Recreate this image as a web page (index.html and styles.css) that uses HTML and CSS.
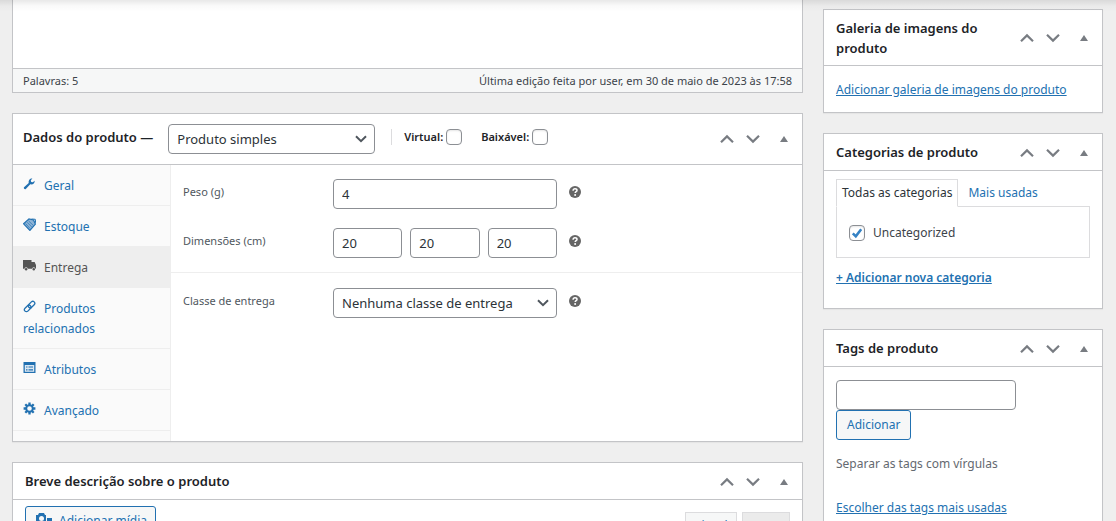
FILE: index.html
```html
<!DOCTYPE html>
<html lang="pt-BR">
<head>
<meta charset="utf-8">
<meta name="viewport" content="width=device-width, initial-scale=1">
<title>Editar produto</title>
<link rel="stylesheet" href="styles.css">
</head>
<body>
<svg class="sprite" aria-hidden="true">
  <symbol id="up" viewBox="0 0 14 10"><path d="M1 8.2 7 2.4l6 5.8" fill="none" stroke="currentColor" stroke-width="2.2"/></symbol>
  <symbol id="down" viewBox="0 0 14 10"><path d="M1 1.8 7 7.6l6-5.8" fill="none" stroke="currentColor" stroke-width="2.2"/></symbol>
  <symbol id="toggle" viewBox="0 0 8 6"><path d="M4 0 8 6H0z" fill="currentColor"/></symbol>
  <symbol id="help" viewBox="0 0 12 12"><circle cx="6" cy="6" r="6" fill="currentColor"/><path d="M4.1 4.7C4.1 3.4 4.9 2.8 6 2.8s2 .6 2 1.6c0 1.3-1.8 1.3-1.8 2.6" fill="none" stroke="#fff" stroke-width="1.5"/><circle cx="6.1" cy="8.9" r="1" fill="#fff"/></symbol>
</svg>
<div class="topbar"></div>
<div class="page">
  <main class="main">
    <section class="editor">
      <div class="editor-body"></div>
      <div class="editor-status"><span>Palavras: 5</span><span>Última edição feita por user, em 30 de maio de 2023 às 17:58</span></div>
    </section>

    <section class="box">
      <header class="box-head data-head">
        <h2>Dados do produto —</h2>
        <select class="type-select" aria-label="Tipo de produto"><option>Produto simples</option></select>
        <div class="type-flags">
          <label>Virtual: <input type="checkbox"></label>
          <label>Baixável: <input type="checkbox"></label>
        </div>
        <div class="actions">
          <button type="button" aria-label="Mover para cima"><svg class="chev"><use href="#up"/></svg></button>
          <button type="button" aria-label="Mover para baixo"><svg class="chev"><use href="#down"/></svg></button>
          <button type="button" class="toggle" aria-label="Alternar painel"><svg class="tri"><use href="#toggle"/></svg></button>
        </div>
      </header>
      <div class="data-body">
        <nav class="tabs">
          <a href="#geral"><svg viewBox="0 0 13 13"><path d="M1 10.2 5.7 5.9C5.2 3.6 7 1.3 9.4 1.6L7.8 3.3l.4 1.6 1.6.4 1.9-1.6c.2 2.500-2.100 4.300-4.400 3.600L2.800 12a1.300 1.300 0 0 1-1.800-1.800z" fill="currentColor"/></svg>Geral</a>
          <a href="#estoque"><svg viewBox="0 0 13 13"><path d="M.6 5.800 6 .9l4.500 1 1.900 4.200-5.500 6.300z" fill="#8fb4d6" stroke="currentColor" stroke-width="1.200"/><path d="m2.500 5.500 4.600 5M4 4.200l4.700 4.700M5.500 2.900l4.900 4.600" stroke="currentColor" stroke-width=".7"/><path d="m8.500 1 3.800.3.300 3.500" fill="none" stroke="currentColor"/></svg>Estoque</a>
          <a href="#entrega" class="active" aria-current="page"><svg viewBox="0 0 13 13"><path d="M0 1h8.500v8.800H4.700a1.600 1.600 0 0 0-3.200 0H0zM8.500 3h3.100L13 6v3.800h-.6a1.600 1.600 0 0 0-3.200 0h-.7z" fill="currentColor"/><circle cx="3.100" cy="10.200" r="1.200" fill="currentColor"/><circle cx="10.800" cy="10.200" r="1.200" fill="currentColor"/></svg>Entrega</a>
          <a href="#relacionados"><svg viewBox="0 0 13 13"><g fill="none" stroke="currentColor" stroke-width="1.300"><rect x="4.700" y="2.600" width="7.600" height="4" rx="2" transform="rotate(-45 8.500 4.600)"/><rect x=".9" y="6.400" width="7.600" height="4" rx="2" transform="rotate(-45 4.700 8.400)"/></g></svg>Produtos relacionados</a>
          <a href="#atributos"><svg viewBox="0 0 13 13"><path d="M.5 1h12v11H.5z" fill="currentColor"/><path d="M1.800 4h9.400v6.800H1.800z" fill="#dce8f2"/><path d="M3 5.400h1.500v1.200H3zM3 8.200h1.500v1.200H3zM5.500 5.400H10v1.200H5.500zM5.500 8.200H10v1.200H5.500z" fill="currentColor"/></svg>Atributos</a>
          <a href="#avancado"><svg viewBox="0 0 13 13"><circle cx="6.500" cy="6.500" r="3.300" fill="none" stroke="currentColor" stroke-width="2"/><path d="M6.500.6v2.300M6.500 10.100v2.300M.6 6.500h2.300M10.100 6.500h2.300M2.300 2.300 4 4M9 9l1.700 1.700M10.700 2.300 9 4M4 9l-1.700 1.700" stroke="currentColor" stroke-width="2.300"/></svg>Avançado</a>
        </nav>
        <div class="fields">
          <div class="group">
            <div class="field">
              <label for="peso">Peso (g)</label>
              <div class="control"><input type="text" id="peso" value="4"></div>
              <svg class="help" role="img" aria-label="Ajuda"><use href="#help"/></svg>
            </div>
            <div class="field">
              <label for="comp">Dimensões (cm)</label>
              <div class="control"><input type="text" id="comp" value="20"><input type="text" value="20" aria-label="Largura"><input type="text" value="20" aria-label="Altura"></div>
              <svg class="help" role="img" aria-label="Ajuda"><use href="#help"/></svg>
            </div>
          </div>
          <div class="group">
            <div class="field">
              <label for="classe">Classe de entrega</label>
              <div class="control"><select id="classe"><option>Nenhuma classe de entrega</option></select></div>
              <svg class="help" role="img" aria-label="Ajuda"><use href="#help"/></svg>
            </div>
          </div>
        </div>
      </div>
    </section>

    <section class="box">
      <header class="box-head">
        <h2>Breve descrição sobre o produto</h2>
        <div class="actions">
          <button type="button" aria-label="Mover para cima"><svg class="chev"><use href="#up"/></svg></button>
          <button type="button" aria-label="Mover para baixo"><svg class="chev"><use href="#down"/></svg></button>
          <button type="button" class="toggle" aria-label="Alternar painel"><svg class="tri"><use href="#toggle"/></svg></button>
        </div>
      </header>
      <div class="desc-body">
        <button type="button" class="button media"><svg viewBox="0 0 18 16"><path d="M1 2h2l1-2h5l1 2h1v9H1z" fill="currentColor"/><circle cx="6.500" cy="5.500" r="2.500" fill="#f6f7f7"/><path d="M12 5h5v8a2 2 0 1 1-2-2V8h-3z" fill="currentColor"/></svg>Adicionar mídia</button>
        <div class="modes"><button type="button" class="mode">Visual</button><button type="button" class="mode off">Texto</button></div>
      </div>
    </section>
  </main>

  <aside class="side">
    <section class="box">
      <header class="box-head">
        <h2>Galeria de imagens do produto</h2>
        <div class="actions">
          <button type="button" aria-label="Mover para cima"><svg class="chev"><use href="#up"/></svg></button>
          <button type="button" aria-label="Mover para baixo"><svg class="chev"><use href="#down"/></svg></button>
          <button type="button" class="toggle" aria-label="Alternar painel"><svg class="tri"><use href="#toggle"/></svg></button>
        </div>
      </header>
      <div class="gallery-body"><a href="#galeria">Adicionar galeria de imagens do produto</a></div>
    </section>

    <section class="box">
      <header class="box-head">
        <h2>Categorias de produto</h2>
        <div class="actions">
          <button type="button" aria-label="Mover para cima"><svg class="chev"><use href="#up"/></svg></button>
          <button type="button" aria-label="Mover para baixo"><svg class="chev"><use href="#down"/></svg></button>
          <button type="button" class="toggle" aria-label="Alternar painel"><svg class="tri"><use href="#toggle"/></svg></button>
        </div>
      </header>
      <div class="cat-body">
        <div class="cat-tabs"><a href="#todas" class="current">Todas as categorias</a><a href="#usadas">Mais usadas</a></div>
        <div class="cat-panel"><label><input type="checkbox" checked>Uncategorized</label></div>
        <a href="#nova" class="add-cat">+ Adicionar nova categoria</a>
      </div>
    </section>

    <section class="box">
      <header class="box-head">
        <h2>Tags de produto</h2>
        <div class="actions">
          <button type="button" aria-label="Mover para cima"><svg class="chev"><use href="#up"/></svg></button>
          <button type="button" aria-label="Mover para baixo"><svg class="chev"><use href="#down"/></svg></button>
          <button type="button" class="toggle" aria-label="Alternar painel"><svg class="tri"><use href="#toggle"/></svg></button>
        </div>
      </header>
      <div class="tag-body">
        <input type="text" class="tag-input" aria-label="Adicionar nova tag">
        <button type="button" class="button">Adicionar</button>
        <p>Separar as tags com vírgulas</p>
        <a href="#tags">Escolher das tags mais usadas</a>
      </div>
    </section>
  </aside>
</div>
</body>
</html>
```

FILE: styles.css
```css
* { box-sizing: border-box; }
body {
  margin: 0;
  height: 100vh;
  overflow: hidden;
  background: #efefef;
  color: #3c434a;
  font: 12px/20px "Noto Sans", "Open Sans", sans-serif;
}
a { color: #2271b1; }
h2 { margin: 0; font-size: 13px; line-height: 20px; font-weight: 600; color: #1d2327; }
button, input, select { font: inherit; }
.sprite { display: none; }
.topbar {
  position: absolute;
  inset: 0 0 auto;
  height: 12px;
  background: linear-gradient(rgba(0, 0, 0, .09), rgba(0, 0, 0, .02) 50%, transparent);
  pointer-events: none;
}
.page { display: flex; align-items: flex-start; gap: 20px; padding: 0 13px 0 12px; }
.main { flex: 1; min-width: 0; display: grid; gap: 20px; }
.side { flex: 0 0 280px; display: grid; gap: 20px; padding-top: 9px; }

.editor { background: #fff; border: 1px solid #c3c4c7; border-top: 0; }
.editor-body { height: 68px; }
.editor-status {
  display: flex;
  justify-content: space-between;
  padding: 2px 10px 1px;
  border-top: 1px solid #c3c4c7;
  background: #f6f7f7;
  font-size: 11px;
}

.box { background: #fff; border: 1px solid #c3c4c7; box-shadow: 0 1px 1px rgba(0, 0, 0, .04); }
.box-head {
  display: flex;
  align-items: center;
  justify-content: space-between;
  min-height: 37px;
  padding: 8px 8px 7px 12px;
  border-bottom: 1px solid #c3c4c7;
}
.box-head h2 { align-self: flex-start; }
.data-head { padding: 10px 8px 10px 10px; justify-content: flex-start; }
.data-head h2 { align-self: center; }
.data-head h2, .type-flags { margin-bottom: 4px; }
.actions { display: flex; align-items: center; flex: none; margin-left: auto; }
.actions button {
  display: flex;
  align-items: center;
  justify-content: center;
  width: 26px;
  height: 20px;
  padding: 0;
  border: 0;
  background: none;
  color: #787c82;
}
.actions .toggle { width: 20px; margin-left: 8px; }
.chev { width: 14px; height: 10px; }
.tri { width: 8px; height: 6px; }

input[type="text"], select {
  height: 30px;
  padding: 0 8px;
  border: 1px solid #8c8f94;
  border-radius: 4px;
  background: #fff;
  color: #2c3338;
  font-size: 13px;
}
select {
  appearance: none;
  padding-right: 24px;
  background: #fff url("data:image/svg+xml,%3Csvg xmlns='http://www.w3.org/2000/svg' width='12' height='8' viewBox='0 0 12 8'%3E%3Cpath d='M1 1.200l5 5 5-5' fill='none' stroke='%2350575e' stroke-width='2'/%3E%3C/svg%3E") no-repeat right 7px center;
}
input[type="checkbox"] {
  appearance: none;
  width: 16px;
  height: 16px;
  margin: 0;
  border: 1px solid #8c8f94;
  border-radius: 4px;
  background: #fff;
  box-shadow: inset 0 1px 2px rgba(0, 0, 0, .1);
}
input[type="checkbox"]:checked {
  background: #fff url("data:image/svg+xml,%3Csvg xmlns='http://www.w3.org/2000/svg' width='12' height='12' viewBox='0 0 12 12'%3E%3Cpath d='M1.800 6.300l3 3 5.400-7' fill='none' stroke='%233582c4' stroke-width='2.600'/%3E%3C/svg%3E") no-repeat center;
}

.type-select { width: 207px; margin-left: 15px; }
.type-flags {
  display: flex;
  align-items: center;
  gap: 19px;
  height: 16px;
  margin-left: 16px;
  padding-left: 12px;
  border-left: 1px solid #dcdcde;
  color: #1d2327;
  font-size: 11px;
  font-weight: 600;
}
.type-flags label { display: flex; align-items: center; gap: 3px; }
.data-body { display: flex; }
.tabs { flex: 0 0 158px; padding-bottom: 10px; background: #fafafa; border-right: 1px solid #eee; }
.tabs a { display: block; padding: 11px 10px 9px; border-bottom: 1px solid #eee; text-decoration: none; }
.tabs svg { width: 13px; height: 13px; margin-right: 8px; }
.tabs .active { background: #eee; color: #555; }
.fields { flex: 1; }
.group { display: grid; gap: 19px; padding: 14px 12px; }
.group + .group { padding-top: 15px; border-top: 1px solid #eee; }
.field { display: flex; color: #50575e; }
.field label { width: 150px; padding-top: 3px; font-size: 11px; }
.control { display: flex; gap: 8px; width: 224px; }
.control input, .control select { flex: 1; min-width: 0; }
.help { width: 12px; height: 12px; margin: 7px 0 0 12px; color: #666; }

.desc-body { display: flex; align-items: flex-start; justify-content: space-between; padding: 6px 12px 12px; }
.button {
  height: 30px;
  padding: 0 10px;
  border: 1px solid #2271b1;
  border-radius: 3px;
  background: #f6f7f7;
  color: #2271b1;
}
.media { display: flex; align-items: center; padding: 0 8px 0 9px; }
.media svg { width: 18px; height: 16px; margin-right: 6px; }
.modes { display: flex; gap: 5px; padding-top: 6px; }
.mode { width: 52px; height: 28px; padding: 0; border: 1px solid #dcdcde; background: #f6f7f7; color: #2271b1; }
.mode.off { width: 48px; background: #ebebeb; color: #646970; }

.gallery-body { padding: 14px 12px 12px; }
.cat-body { padding: 8px 12px 20px; }
.cat-tabs { display: flex; }
.cat-tabs a { padding: 4px 10px 2px; text-decoration: none; }
.cat-tabs .current {
  padding: 3px 5px;
  margin-bottom: -1px;
  border: 1px solid #dcdcde;
  border-bottom-color: #fff;
  background: #fff;
  color: #2c3338;
  z-index: 1;
}
.cat-panel { padding: 16px 12px 14px; border: 1px solid #dcdcde; }
.cat-panel label { display: flex; align-items: center; gap: 8px; }
.add-cat { display: block; margin-top: 10px; font-weight: 600; }
.tag-body { display: flex; flex-direction: column; align-items: flex-start; padding: 13px 12px; }
.tag-input { width: 180px; }
.tag-body p { margin: 14px 0 24px; color: #646970; }
```
